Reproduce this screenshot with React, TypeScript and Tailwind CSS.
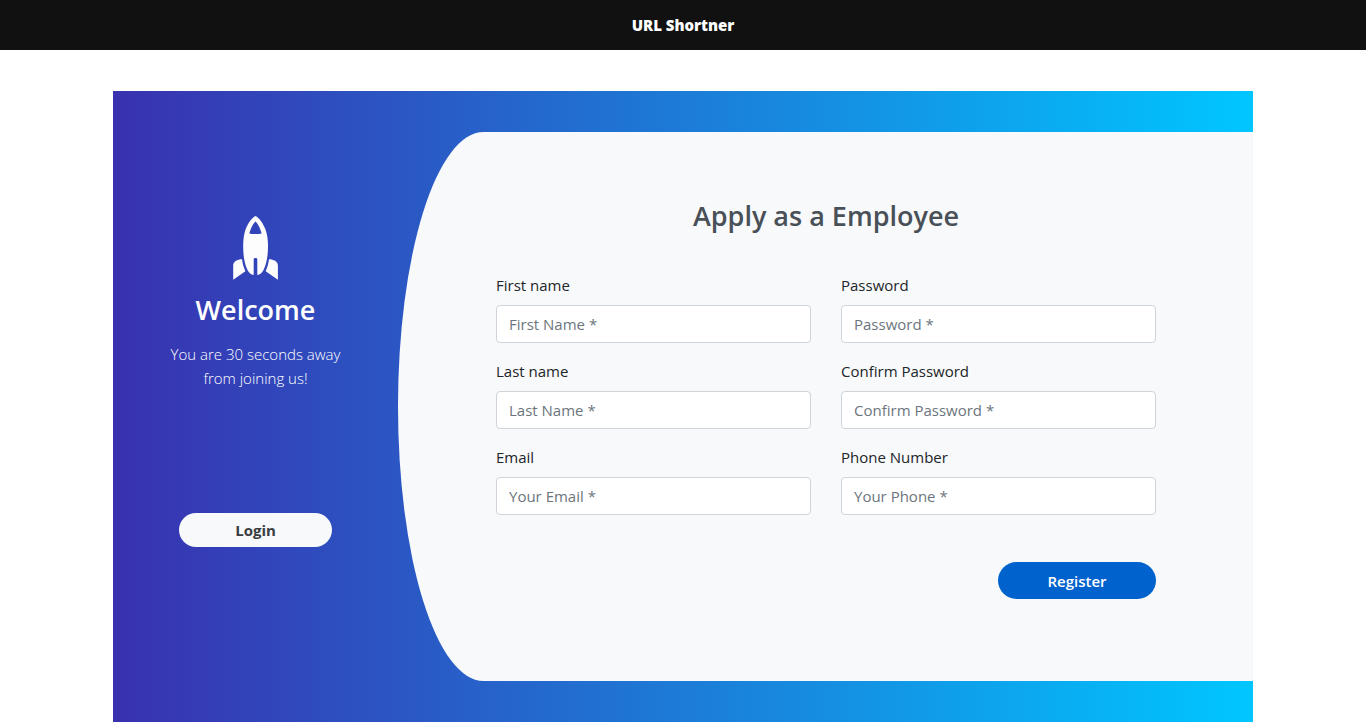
import React from "react";

type Field = { id: string; label: string; placeholder: string; type: string };

const fields: Field[] = [
  { id: "first-name", label: "First name", placeholder: "First Name *", type: "text" },
  { id: "password", label: "Password", placeholder: "Password *", type: "password" },
  { id: "last-name", label: "Last name", placeholder: "Last Name *", type: "text" },
  { id: "confirm-password", label: "Confirm Password", placeholder: "Confirm Password *", type: "password" },
  { id: "email", label: "Email", placeholder: "Your Email *", type: "email" },
  { id: "phone", label: "Phone Number", placeholder: "Your Phone *", type: "tel" },
];

function Rocket() {
  return (
    <svg viewBox="232 215 47 66" className="h-[66px] w-[47px]" fill="#fdfdfe" aria-hidden="true">
      <path
        fillRule="evenodd"
        d="M255.500 216C259 217.800 263 223 265.500 229.500C267.500 235 268.100 241 268 247.500C267.900 256 266.500 264 263.500 270C262 272.800 260 274.700 257.300 274.900V259.200C257.300 257.600 253.700 257.600 253.700 259.200V274.900C251 274.700 249 272.800 247.500 270C244.500 264 243.300 256 243.200 247.500C243.100 241 243.700 235 245.500 229.500C248 223 252 217.800 255.500 216ZM255.500 221.500C253.700 222.600 250.500 228.500 249.400 233.400C252 234.100 259 234.100 261.600 233.400C260.500 228.500 257.300 222.600 255.500 221.500Z"
      />
      <path d="M242 259.300C237.500 259.300 233.200 261.500 233.200 265.500V279.800L245.400 271.200C243.700 267.500 242.500 263.500 242 259.300Z" />
      <path d="M269 259.300C273.500 259.300 277.900 261.500 277.900 265.500V279.800L265.700 271.200C267.400 267.500 268.500 263.500 269 259.300Z" />
    </svg>
  );
}

export default function App() {
  return (
    <div className="font-['Open_Sans','Noto_Sans',sans-serif] text-[15px] leading-6 text-[#212529]">
      <header className="flex h-[50px] items-center justify-center bg-[#111111]">
        <h1 className="text-[15px] font-extrabold text-white">URL Shortner</h1>
      </header>

      <main className="mx-auto mt-[41px] flex max-w-[1140px] bg-linear-to-r/srgb from-[#3931af] to-[#00c6ff] py-[41px]">
        <section className="flex w-1/4 flex-col items-center pt-[83px] text-center text-white">
          <Rocket />
          <h2 className="mt-3 text-[27px] leading-[34px] font-semibold">Welcome</h2>
          <p className="mt-[15px] max-w-[180px] font-light">You are 30 seconds away from joining us!</p>
          <button
            type="button"
            className="mt-[123px] h-[34px] w-[153px] rounded-full bg-[#f8f9fa] font-bold text-[#383d41]"
          >
            Login
          </button>
        </section>

        <section className="w-3/4 rounded-l-[10%_50%] bg-[#f8f9fa] pt-[67px] pr-[97px] pb-[82px] pl-[98px]">
          <h3 className="text-center text-[27px] leading-[34px] font-semibold text-[#495057]">
            Apply as a Employee
          </h3>
          <form className="mt-10" onSubmit={(e) => e.preventDefault()}>
            <div className="grid grid-cols-2 gap-x-[30px] gap-y-4">
              {fields.map((f) => (
                <div key={f.id} className="flex flex-col gap-2">
                  <label htmlFor={f.id}>{f.label}</label>
                  <input
                    id={f.id}
                    type={f.type}
                    placeholder={f.placeholder}
                    className="h-[38px] w-full rounded border border-[#ced4da] bg-white px-3 placeholder:text-[#6c757d]"
                  />
                </div>
              ))}
            </div>
            <div className="mt-[47px] flex justify-end">
              <button type="submit" className="h-[37px] w-[158px] rounded-full bg-[#0062cc] font-semibold text-white">
                Register
              </button>
            </div>
          </form>
        </section>
      </main>
    </div>
  );
}
